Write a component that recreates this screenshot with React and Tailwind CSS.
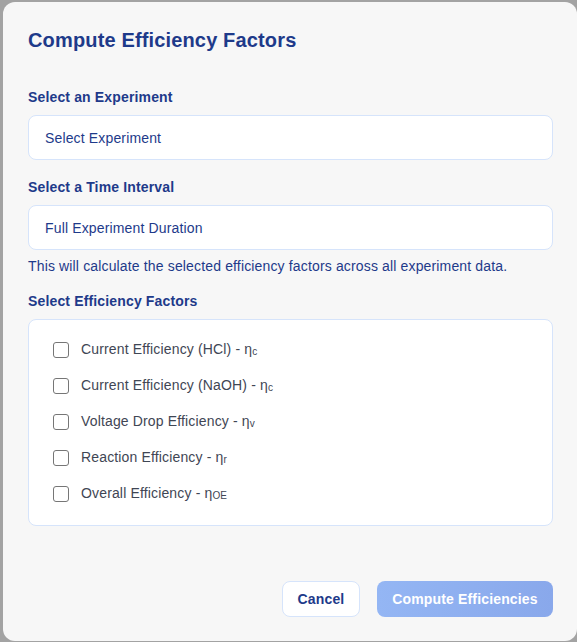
import React from "react";

const FACTORS = [
  { label: "Current Efficiency (HCl) - η", sub: "c" },
  { label: "Current Efficiency (NaOH) - η", sub: "c" },
  { label: "Voltage Drop Efficiency - η", sub: "v" },
  { label: "Reaction Efficiency - η", sub: "r" },
  { label: "Overall Efficiency - η", sub: "OE" },
];

function Field({ children }) {
  return (
    <div className="flex h-[45px] items-center rounded-lg border border-[#d6e4fb] bg-white px-4 text-sm text-[#1e3a8a]">
      {children}
    </div>
  );
}

export default function App() {
  return (
    <div
      className="h-[642px] w-[577px] overflow-hidden bg-[#a3a3a3] pl-[3px] pt-[2px] tracking-[0.15px]"
      style={{ fontFamily: '"Liberation Sans", Arial, sans-serif' }}
    >
      <div className="flex h-[639px] w-[574px] flex-col rounded-xl bg-[#f7f7f7] pr-[24px] pl-[25px] pt-[24px]">
        {/* Title */}
        <h2 className="text-xl leading-7 font-bold text-[#1e3a8a]">
          Compute Efficiency Factors
        </h2>

        {/* Experiment */}
        <label className="mt-[33px] mb-2 text-sm leading-5 font-bold text-[#1e3a8a]">
          Select an Experiment
        </label>
        <Field>Select Experiment</Field>

        {/* Interval */}
        <label className="mt-[17px] mb-2 text-sm leading-5 font-bold text-[#1e3a8a]">
          Select a Time Interval
        </label>
        <Field>Full Experiment Duration</Field>
        <p className="mt-[6px] text-sm leading-5 text-[#1e3a8a]">
          This will calculate the selected efficiency factors across all experiment data.
        </p>

        {/* Factors */}
        <label className="mt-[15px] mb-2 text-sm leading-5 font-bold text-[#1e3a8a]">
          Select Efficiency Factors
        </label>
        <div className="flex flex-col gap-4 rounded-lg border border-[#d6e4fb] bg-white px-6 pt-[20px] pb-[21px]">
          {FACTORS.map((f) => (
            <div key={f.label + f.sub} className="flex h-5 items-center gap-3">
              <span className="h-4 w-4 rounded-[3px] border border-[#767676] bg-white" />
              <span className="text-sm leading-5 text-[#3f4654]">
                {f.label}
                <span className="align-[-1px] text-[10px]">{f.sub}</span>
              </span>
            </div>
          ))}
        </div>

        {/* Actions */}
        <div className="mt-[55px] flex justify-end gap-[17px]">
          <button className="h-9 w-[78px] rounded-lg border border-[#d6e4fb] bg-white text-sm font-bold text-[#1e3a8a]">
            Cancel
          </button>
          <button className="h-9 w-[176px] rounded-lg bg-gradient-to-r from-[#94b6f4] to-[#89a8eb] text-sm font-bold text-white">
            Compute Efficiencies
          </button>
        </div>
      </div>
    </div>
  );
}
